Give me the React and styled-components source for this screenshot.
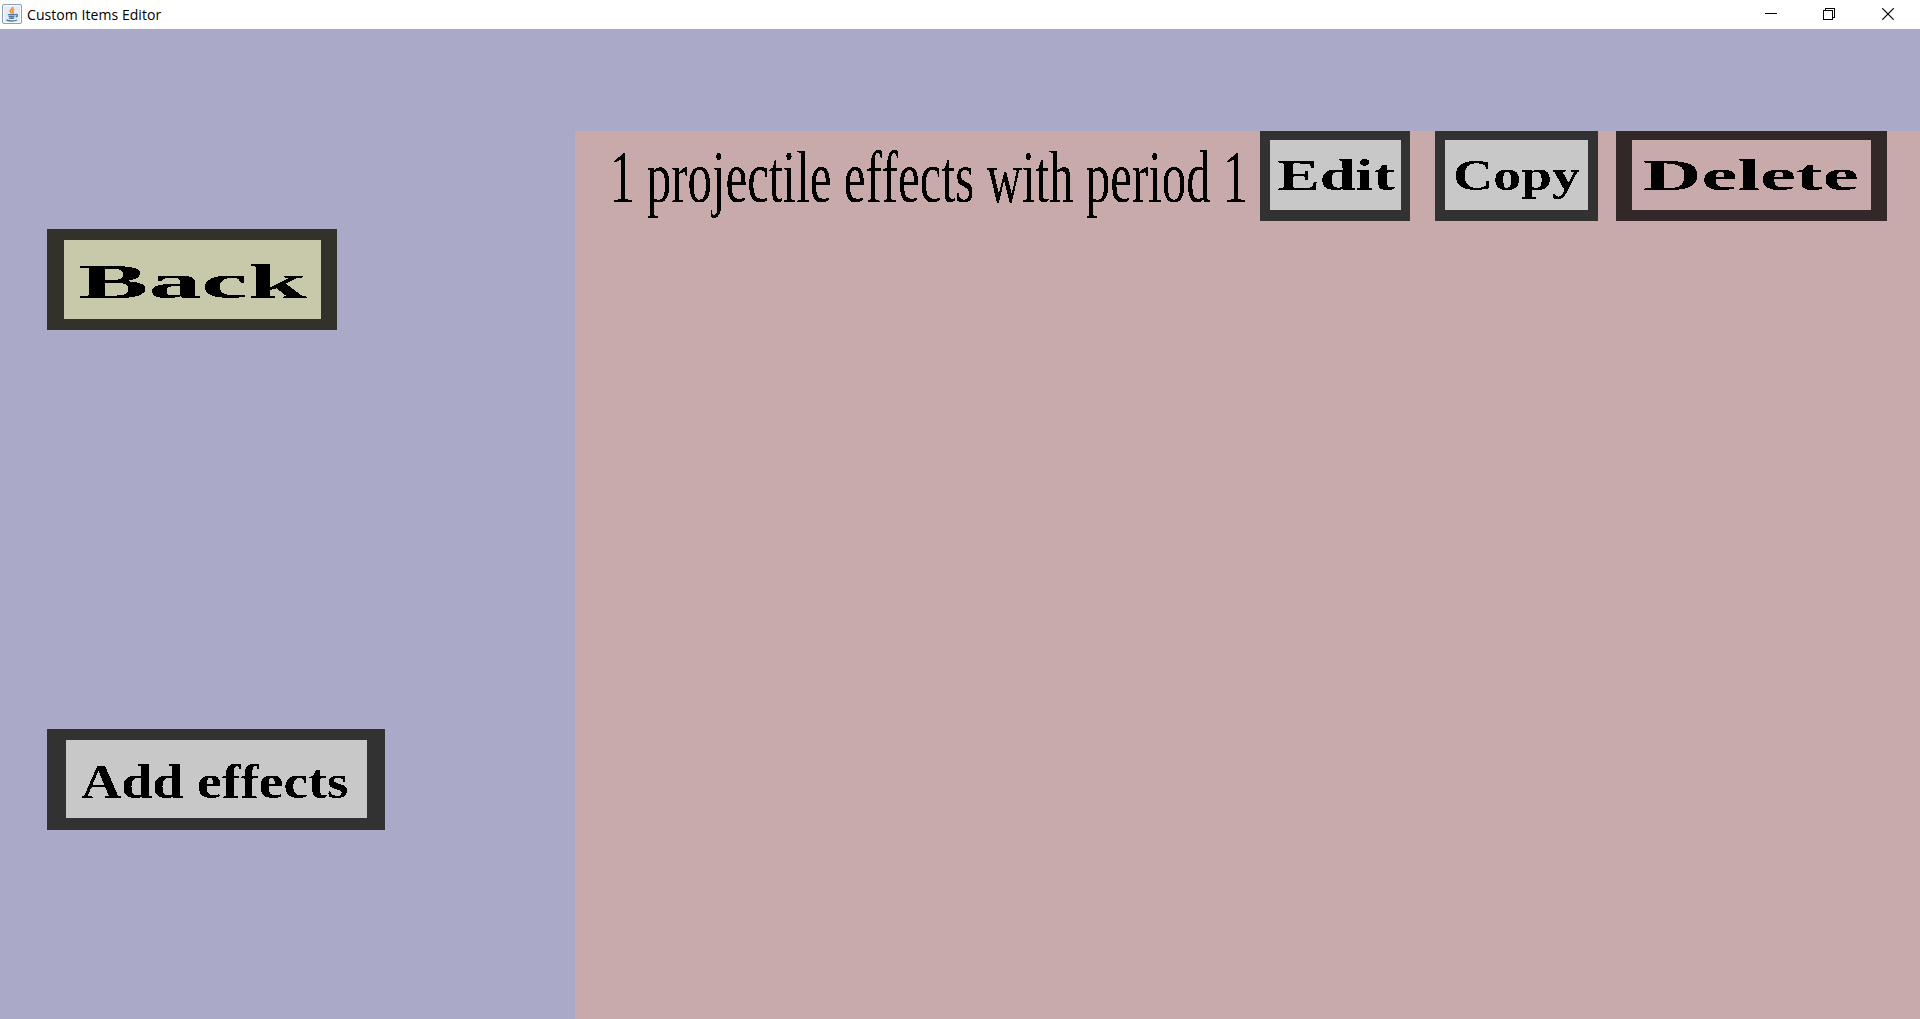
import React from 'react';
import styled, { createGlobalStyle } from 'styled-components';

const GlobalStyle = createGlobalStyle`
  html, body, #root { height: 100%; margin: 0; }
  body { overflow: hidden; background: #aaaac8; }
`;

const Window = styled.div`
  display: flex;
  flex-direction: column;
  height: 100%;
  background: #aaaac8;
  color: #000;
`;

const TitleBar = styled.header`
  display: flex;
  align-items: center;
  flex: none;
  height: 29px;
  padding: 0 2px 2px 2px;
  box-sizing: border-box;
  background: #fff;
`;

const Title = styled.span`
  flex: 1;
  margin-left: 5px;
  padding-top: 1px;
  font: 14px/27px 'Open Sans', 'Noto Sans', sans-serif;
  letter-spacing: 0.06px;
`;

const WindowButton = styled.button`
  display: flex;
  justify-content: center;
  width: ${(p) => p.$width}px;
  padding: 1px 0 0;
  border: 0;
  background: none;
`;

const Content = styled.main`
  display: flex;
  flex: 1;
  min-height: 0;
`;

const Sidebar = styled.nav`
  display: flex;
  flex-direction: column;
  align-items: flex-start;
  gap: 399px;
  box-sizing: border-box;
  width: 575px;
  padding: 200px 0 0 47px;
`;

const Panel = styled.section`
  flex: 1;
  margin-top: 102px;
  background: #c8aaaa;
`;

const EffectRow = styled.div`
  display: flex;
  align-items: flex-start;
  padding-left: 35px;
`;

const tones = {
  neutral: { fill: '#c8c8c8', edge: '#323232' },
  back: { fill: '#c8c8aa', edge: '#32322a' },
  danger: { fill: '#c8aaaa', edge: '#322828' },
};

const Frame = styled.button`
  display: flex;
  flex: none;
  box-sizing: border-box;
  width: ${(p) => p.$width}px;
  height: ${(p) => p.$height}px;
  margin: 0 ${(p) => p.$after || 0}px 0 0;
  padding: 0 0 0 ${(p) => p.$inset}px;
  border-style: solid;
  border-width: ${(p) => p.$edges};
  border-color: ${(p) => tones[p.$tone].edge};
  background: ${(p) => tones[p.$tone].fill};
  color: #000;
`;

const Stretched = styled.span`
  display: block;
  width: 0;
  white-space: nowrap;
  font-family: 'Liberation Serif', serif;
  font-weight: ${(p) => (p.$bold ? 700 : 400)};
  font-size: ${(p) => p.$size}px;
  line-height: ${(p) => p.$line}px;
  font-kerning: none;
  font-variant-ligatures: none;
  transform: scaleX(${(p) => p.$stretch});
  transform-origin: 0 0;
`;

const Crisp = styled.span`
  display: block;
  width: ${(p) => p.$width}px;
  filter: url(#crisp-edges);
`;

const Defs = styled.svg`
  position: absolute;
`;

function CrispFilter() {
  return (
    <Defs width="0" height="0" aria-hidden="true">
      <filter id="crisp-edges" x="-10%" y="-10%" width="120%" height="120%" colorInterpolationFilters="sRGB">
        <feComponentTransfer>
          <feFuncA type="discrete" tableValues="0 1" />
        </feComponentTransfer>
      </filter>
    </Defs>
  );
}

function StretchText({ children, span, ...style }) {
  return (
    <Crisp $width={span}>
      <Stretched {...style}>{children}</Stretched>
    </Crisp>
  );
}

function JavaIcon() {
  return (
    <svg width="20" height="20" viewBox="0 0 20 20" fill="none">
      <rect x="0.5" y="0.5" width="19" height="19" rx="1.5" fill="#e6ecf1" stroke="#8aa0b2" />
      <rect x="1.5" y="1.5" width="17" height="17" rx="1" stroke="#fafcfd" />
      <path d="M10.500 2.800c1 2-3 2.800-2.300 4.600.3.900 1.300 1.200 1.300 2.200M12.300 5.200c-1.900.9-2.300 1.700-1.200 2.900.4.600.1 1.100-.5 1.500" stroke="#ee8a35" strokeWidth="1.600" />
      <path d="M5.800 10.600h7.800M6.600 12.500h6M7.300 14.300h4.600M4.500 16c3 1.300 8 1.300 10.500 0M13.500 10.600c2.600-.5 2.400 1.800.2 2.500" stroke="#4f7ca2" strokeWidth="1.400" />
    </svg>
  );
}

export default function App() {
  return (
    <Window>
      <GlobalStyle />
      <CrispFilter />
      <TitleBar>
        <JavaIcon />
        <Title>Custom Items Editor</Title>
        <WindowButton $width={58} aria-label="Minimize">
          <svg width="12" height="12" shapeRendering="crispEdges"><path d="M0 5h12v1H0z" /></svg>
        </WindowButton>
        <WindowButton $width={58} aria-label="Restore">
          <svg width="12" height="12" fill="none" stroke="#000" shapeRendering="crispEdges">
            <path d="M.5 2.500h9v9h-9zM2.500 2.500v-2h9v9h-2" />
          </svg>
        </WindowButton>
        <WindowButton $width={60} aria-label="Close">
          <svg width="12" height="12" stroke="#000" strokeWidth="1.200"><path d="M.3.3l11.400 11.400M11.700.3L.3 11.700" /></svg>
        </WindowButton>
      </TitleBar>
      <Content>
        <Sidebar>
          <Frame $tone="back" $width={290} $height={101} $edges="11px 16px 11px 17px" $inset={14}>
            <StretchText span={230} $bold $size={48} $line={83} $stretch={2.2}>Back</StretchText>
          </Frame>
          <Frame $tone="neutral" $width={338} $height={101} $edges="11px 18px 12px 19px" $inset={15}>
            <StretchText span={270} $bold $size={48} $line={83} $stretch={1.16}>Add effects</StretchText>
          </Frame>
        </Sidebar>
        <Panel>
          <EffectRow>
            <StretchText span={650} $size={74.5} $line={92} $stretch={0.657}>
              1 projectile effects with period 1
            </StretchText>
            <Frame $tone="neutral" $width={150} $height={90} $edges="9px 9px 11px 10px" $inset={7} $after={25}>
              <StretchText span={120} $bold $size={44} $line={72} $stretch={1.46}>Edit</StretchText>
            </Frame>
            <Frame $tone="neutral" $width={163} $height={90} $edges="9px 10px 11px 10px" $inset={8} $after={18}>
              <StretchText span={130} $bold $size={44} $line={72} $stretch={1.265}>Copy</StretchText>
            </Frame>
            <Frame $tone="danger" $width={271} $height={90} $edges="9px 16px 11px 16px" $inset={11}>
              <StretchText span={218} $bold $size={44} $line={72} $stretch={1.84}>Delete</StretchText>
            </Frame>
          </EffectRow>
        </Panel>
      </Content>
    </Window>
  );
}
